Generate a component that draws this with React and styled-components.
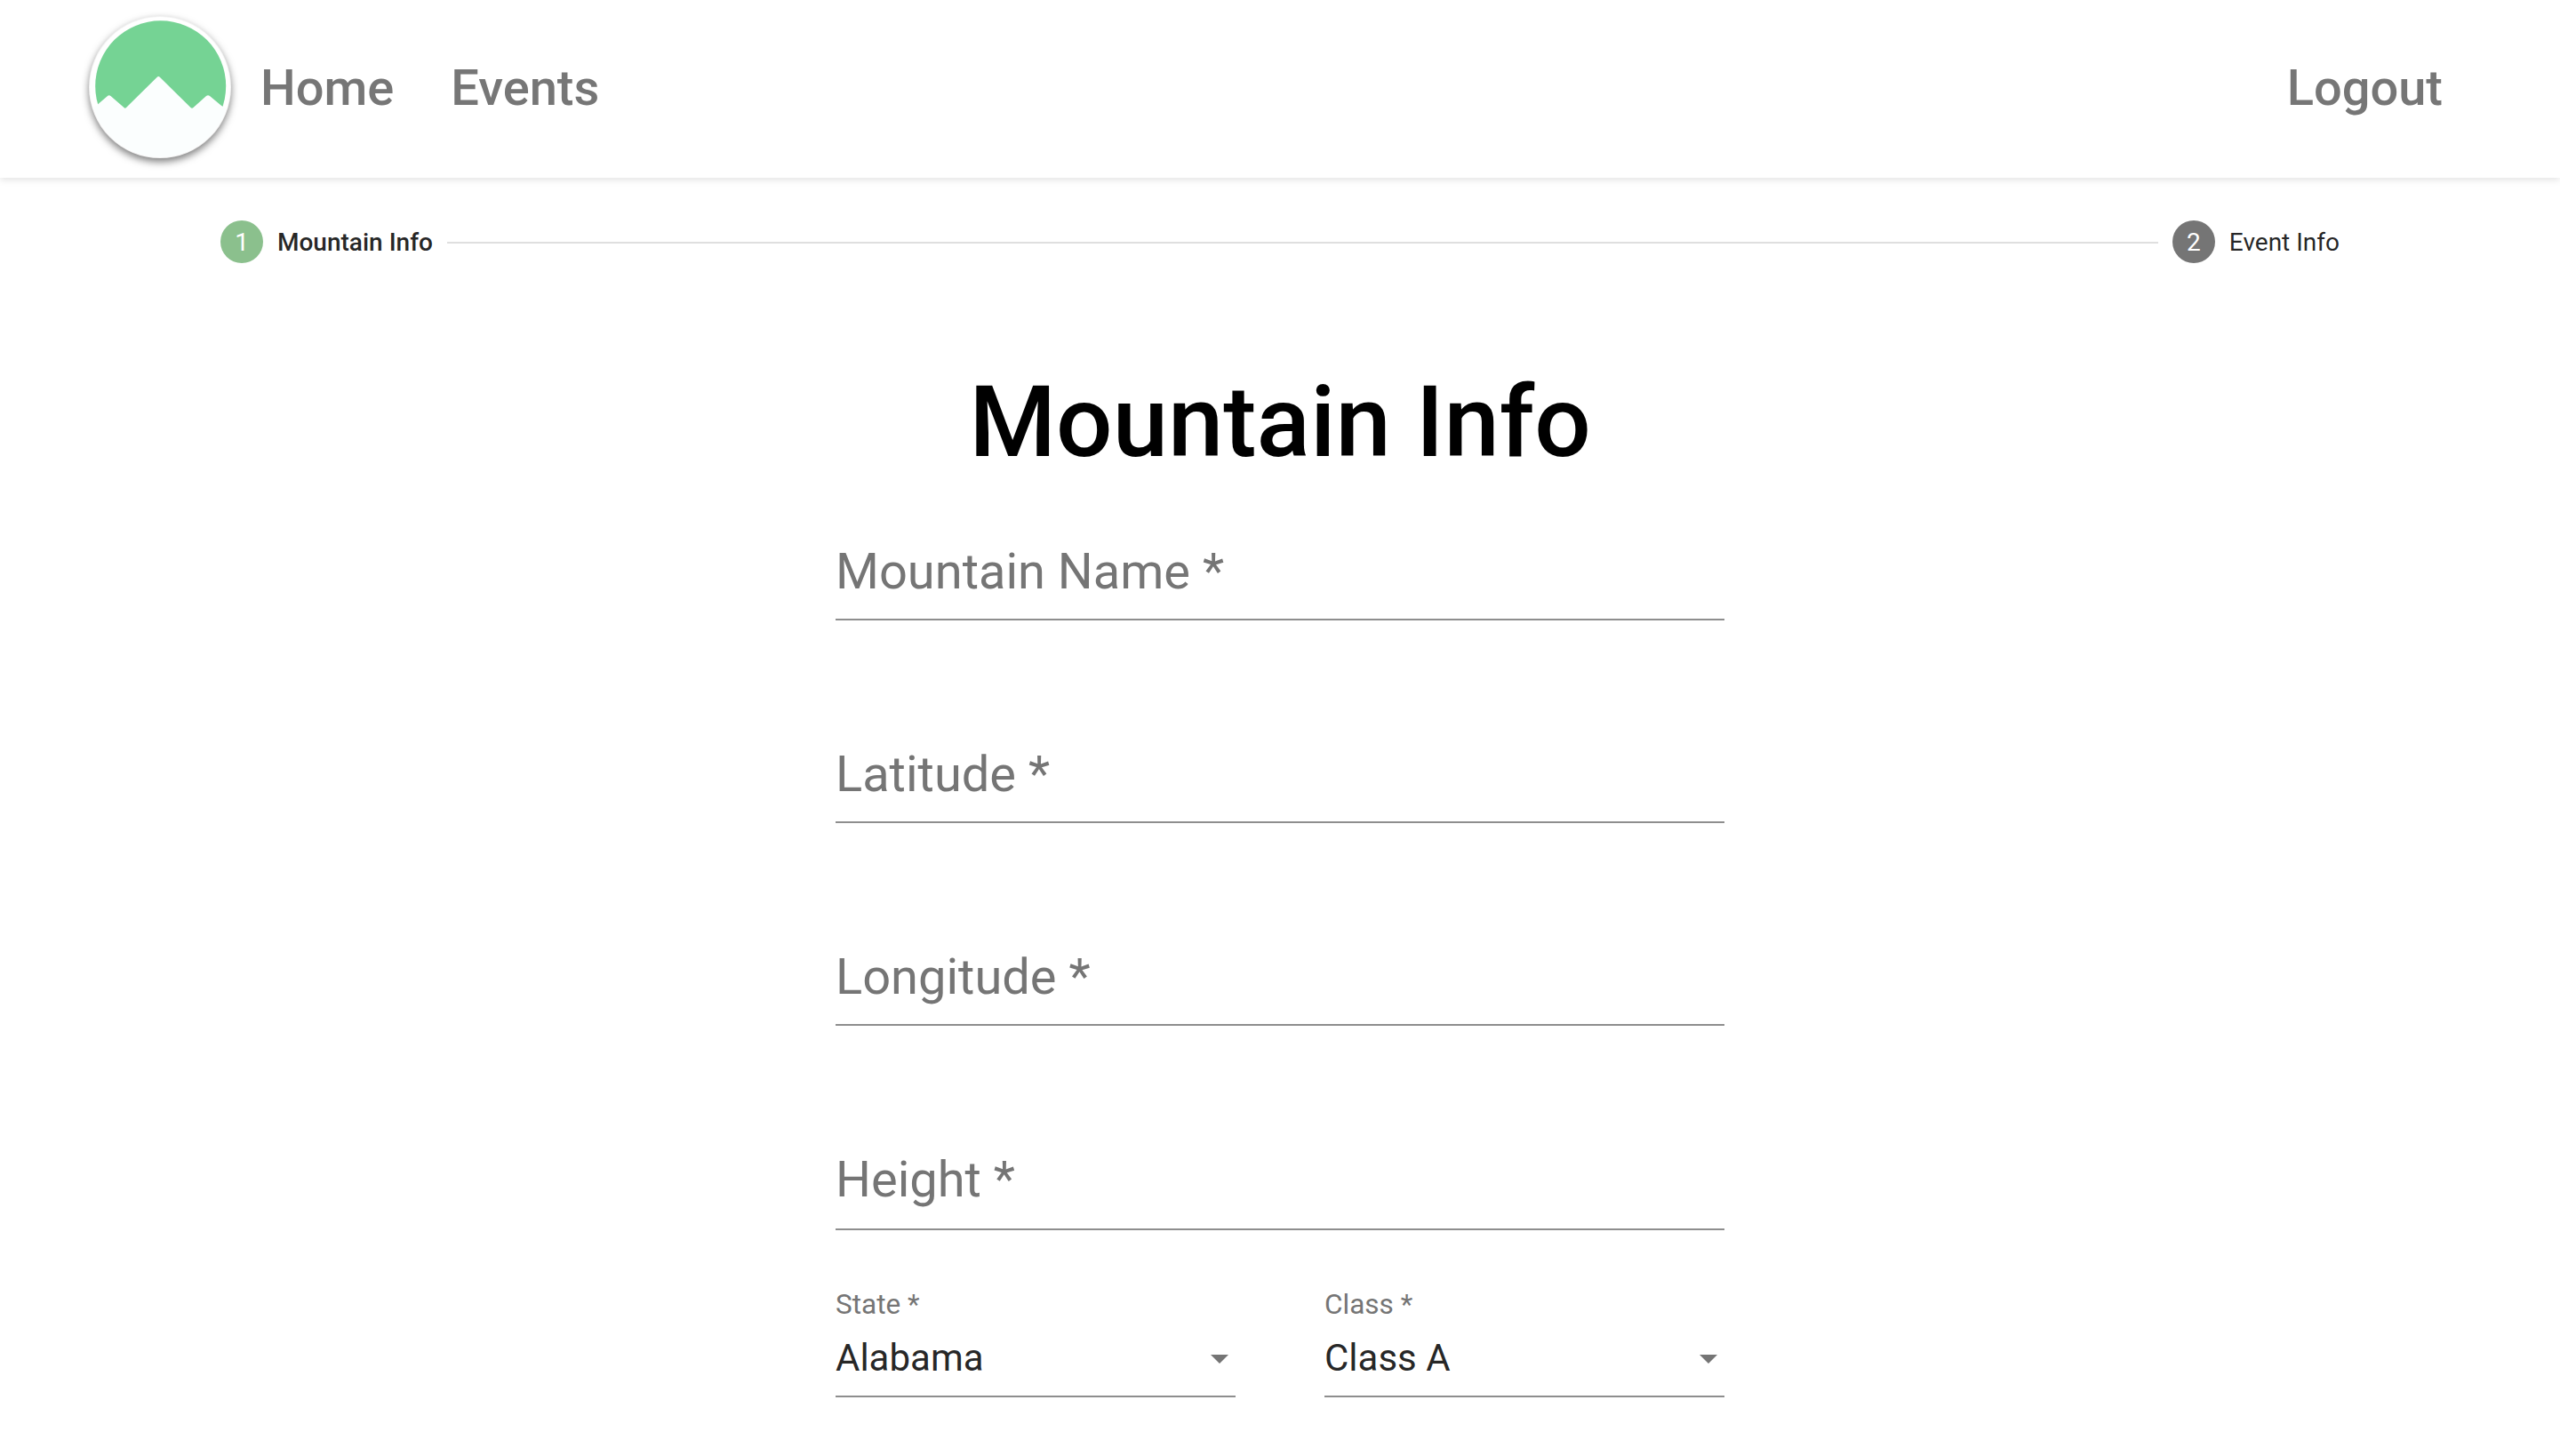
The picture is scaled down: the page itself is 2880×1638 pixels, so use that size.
import React from "react";
import styled, { createGlobalStyle } from "styled-components";

const Global = createGlobalStyle`
  html, body { margin: 0; padding: 0; background: #fff; overflow: hidden; }
  body { font-family: Roboto, "Liberation Sans", sans-serif; }
  * { box-sizing: border-box; }
`;

const Page = styled.div`
  width: 2880px;
  height: 1638px;
  overflow: hidden;
  background: #fff;
  display: flex;
  flex-direction: column;
`;

const Header = styled.header`
  height: 200px;
  flex: none;
  display: flex;
  align-items: center;
  padding: 0 132px 0 100px;
  background: #fff;
  box-shadow: 0 2px 8px rgba(0, 0, 0, 0.12);
`;

const Logo = styled.svg`
  width: 160px;
  height: 160px;
  flex: none;
  overflow: visible;
  margin-bottom: 4px;
  filter: drop-shadow(0 4px 4px rgba(0, 0, 0, 0.5));
`;

const NavLink = styled.a`
  font-size: 56px;
  font-weight: 500;
  line-height: 1;
  color: #767676;
  margin-left: ${(p) => p.$gap}px;
  margin-bottom: 3px;
`;

const Spacer = styled.div`
  flex: 1;
`;

const Stepper = styled.div`
  display: flex;
  align-items: center;
  padding: 48px 232px 0 232px;
  height: 96px;
  flex: none;
`;

const Step = styled.div`
  display: flex;
  align-items: center;
  padding: 0 16px;
`;

const StepDot = styled.div`
  width: 48px;
  height: 48px;
  border-radius: 50%;
  background: ${(p) => p.$color};
  color: #fff;
  font-size: 28px;
  display: flex;
  align-items: center;
  justify-content: center;
  margin-right: 16px;
`;

const StepLabel = styled.span`
  font-size: 28px;
  font-weight: ${(p) => (p.$active ? 500 : 400)};
  color: rgba(0, 0, 0, 0.87);
`;

const StepLine = styled.div`
  flex: 1;
  height: 2px;
  margin-top: 1px;
  background: #dfdfdf;
`;

const Title = styled.h1`
  margin: 112px 0 0;
  text-align: center;
  font-size: 112px;
  font-weight: 500;
  line-height: 1.2;
  color: #000;
`;

const Form = styled.form`
  width: 1000px;
  margin: 48px auto 0;
  display: flex;
  flex-direction: column;
`;

const TextField = styled.div`
  height: ${(p) => p.$h}px;
  flex: none;
  display: flex;
`;

const TextInner = styled.div`
  height: ${(p) => p.$inner || 108}px;
  width: 100%;
  border-bottom: 2px solid #8e8e8e;
  font-size: 56px;
  line-height: 66px;
  color: #757575;
  padding-top: 20px;
`;

const SelectRow = styled.div`
  display: flex;
  justify-content: space-between;
`;

const SelectField = styled.div`
  width: 450px;
  height: 123px;
  border-bottom: 2px solid #8e8e8e;
  display: flex;
  flex-direction: column;
`;

const SelectLabel = styled.span`
  font-size: 31.5px;
  line-height: 38px;
  color: #757575;
`;

const SelectValue = styled.div`
  display: flex;
  align-items: center;
  justify-content: space-between;
  font-size: 42px;
  line-height: 52px;
  color: rgba(0, 0, 0, 0.87);
  margin-top: 15px;
  padding-right: 8px;
`;

const Caret = styled.svg`
  width: 20px;
  height: 10px;
  flex: none;
  margin-top: 2px;
`;

const Arrow = () => (
  <Caret viewBox="0 0 20 10">
    <path d="M0 0h20L10 10z" fill="#757575" />
  </Caret>
);

export default function App() {
  return (
    <Page>
      <Global />
      <Header>
        <Logo viewBox="0 0 160 160">
          <defs>
            <clipPath id="logo-disc">
              <circle cx="80" cy="80" r="78.5" />
            </clipPath>
          </defs>
          <circle cx="80" cy="80" r="80" fill="#f2f2f2" />
          <circle cx="80" cy="80" r="79" fill="#fff" />
          <ellipse cx="80.7" cy="78.8" rx="73.5" ry="73.5" fill="#75d394" />
          <path
            clipPath="url(#logo-disc)"
            d="M-2 108L9.3 100L21 90Q22.7 88.3 24.5 90L39.5 103Q40.7 104.5 42 103L76.5 69Q78.3 67 80 69L114.5 103Q116 104.5 117.5 103L132 90Q134 88.3 136 90L148.3 100.3L162 110V162H-2Z"
            fill="#fbfefe"
          />
        </Logo>
        <NavLink $gap={33}>Home</NavLink>
        <NavLink $gap={64}>Events</NavLink>
        <Spacer />
        <NavLink $gap={0}>Logout</NavLink>
      </Header>
      <Stepper>
        <Step>
          <StepDot $color="#8bc08d">1</StepDot>
          <StepLabel $active>Mountain Info</StepLabel>
        </Step>
        <StepLine />
        <Step>
          <StepDot $color="#757575">2</StepDot>
          <StepLabel>Event Info</StepLabel>
        </Step>
      </Stepper>
      <Title>Mountain Info</Title>
      <Form>
        <TextField $h={228}><TextInner>Mountain Name *</TextInner></TextField>
        <TextField $h={228}><TextInner>Latitude *</TextInner></TextField>
        <TextField $h={228}><TextInner>Longitude *</TextInner></TextField>
        <TextField $h={175}><TextInner $inner={110}>Height *</TextInner></TextField>
        <SelectRow>
          <SelectField>
            <SelectLabel>State *</SelectLabel>
            <SelectValue>Alabama<Arrow /></SelectValue>
          </SelectField>
          <SelectField>
            <SelectLabel>Class *</SelectLabel>
            <SelectValue>Class A<Arrow /></SelectValue>
          </SelectField>
        </SelectRow>
      </Form>
    </Page>
  );
}
